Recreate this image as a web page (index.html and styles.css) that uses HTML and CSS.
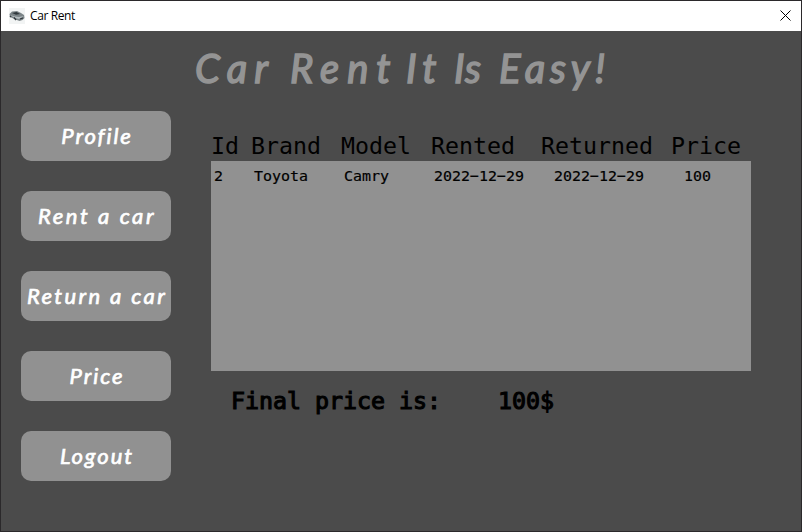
FILE: index.html
```html
<!DOCTYPE html>
<html lang="en">
<head>
<meta charset="utf-8">
<title>Car Rent</title>
<link rel="stylesheet" href="styles.css">
</head>
<body>
<div class="window">
  <header class="titlebar">
    <svg class="app-icon" width="16" height="16" viewBox="0 0 16 16">
      <rect width="16" height="16" fill="#f2f4f4"/>
      <path d="M.5 6 3 3.500 8 3l4 2 3 2 .5 3-2 2-3 1-4-1.500L1 9z" fill="#7c8588"/>
      <path d="M3 5l4.500-1 3.500 2-4 .8z" fill="#30383c"/>
      <path d="M1 7l5 1.500 4 .5 5-1-5 3-4-1z" fill="#b4bcbf"/>
      <path d="M5 9.500l2 2.500M11 11l3-1M1 8l1 1" stroke="#30383c" stroke-width="1.300"/>
    </svg>
    <span class="caption">Car Rent</span>
    <svg class="close" width="11" height="11" viewBox="0 0 11 11"><path d="M.5.5l10 10M10.500.5l-10 10" stroke="#000" stroke-width="1"/></svg>
  </header>
  <main class="content">
    <h1 class="title"><span class="w-car">Car</span><span class="w-rent">Rent</span><span class="w-it">It</span><span class="w-is">Is</span><span class="w-easy">Easy!</span></h1>
    <div class="columns">
      <nav class="menu">
        <button class="profile">Profile</button>
        <button class="rent">Rent a car</button>
        <button class="return">Return a car</button>
        <button class="price">Price</button>
        <button class="logout">Logout</button>
      </nav>
      <section class="rentals">
        <div class="head"><span>Id</span><span>Brand</span><span>Model</span><span>Rented</span><span>Returned</span><span>Price</span></div>
        <div class="list">
          <div class="row"><span>2</span><span>Toyota</span><span>Camry</span><span>2022−12−29</span><span>2022−12−29</span><span>100</span></div>
        </div>
        <div class="total"><span>Final price is:</span><span>100$</span></div>
      </section>
    </div>
  </main>
</div>
</body>
</html>
```
FILE: styles.css
```css
* { box-sizing: border-box; }
body { margin: 0; }
.window {
  width: 802px;
  height: 532px;
  border: 1px solid #2b292b;
  background: #4b4b4b;
  overflow: hidden;
}
.titlebar {
  display: flex;
  align-items: center;
  height: 30px;
  padding: 0 10px 0 8px;
  background: #fff;
}
.caption {
  flex: 1;
  margin-left: 5px;
  font: 12px/16px "Open Sans", sans-serif;
  letter-spacing: -0.4px;
  color: #000;
}
.close { margin-bottom: 2px; }
.title {
  display: grid;
  grid-template-columns: 95px 116px 48px 45px 110px;
  height: 80px;
  margin: 0;
  padding: 13px 0 0 194px;
  font: italic 400 40px/48px Lato, sans-serif;
  color: #949494;
  -webkit-text-stroke: 1.5px #949494;
  white-space: nowrap;
}
.w-car { letter-spacing: 7px; }
.w-rent { letter-spacing: 8px; }
.w-it { letter-spacing: 6px; }
.w-is { letter-spacing: 1px; }
.w-easy { letter-spacing: 5px; }
.columns {
  display: flex;
  gap: 40px;
  padding-left: 20px;
}
.menu {
  display: flex;
  flex-direction: column;
  gap: 30px;
  width: 150px;
}
.menu button {
  height: 50px;
  padding: 0;
  border: 0;
  border-radius: 10px;
  background: #919191;
  color: #fff;
  font: italic 400 22px/50px Lato, sans-serif;
  -webkit-text-stroke: 0.7px #fff;
  white-space: nowrap;
}
.menu .profile { letter-spacing: 1.9px; padding-left: 2px; }
.menu .rent { letter-spacing: 2.6px; padding-left: 2px; }
.menu .return { letter-spacing: 2.4px; padding-left: 2px; }
.menu .price { letter-spacing: 2px; padding-left: 2px; }
.menu .logout { letter-spacing: 2px; padding-left: 2px; }
.rentals {
  width: 540px;
  padding-top: 20px;
  font-family: "DejaVu Sans Mono", monospace;
  color: #000;
}
.head {
  display: grid;
  grid-template-columns: 40px 90px 90px 110px 130px 80px;
  height: 30px;
  font-size: 23.250px;
  line-height: 29px;
}
.list {
  height: 210px;
  padding: 5px 3px;
  background: #919191;
}
.row {
  display: grid;
  grid-template-columns: 40px 90px 90px 120px 130px 60px;
  font-size: 14.950px;
  line-height: 20px;
  -webkit-text-stroke: 0.2px #000;
}
.total {
  display: flex;
  gap: 57px;
  padding: 15px 0 0 20px;
  font-size: 23.250px;
  line-height: 30px;
  -webkit-text-stroke: 1.1px #000;
  white-space: pre;
}
```
